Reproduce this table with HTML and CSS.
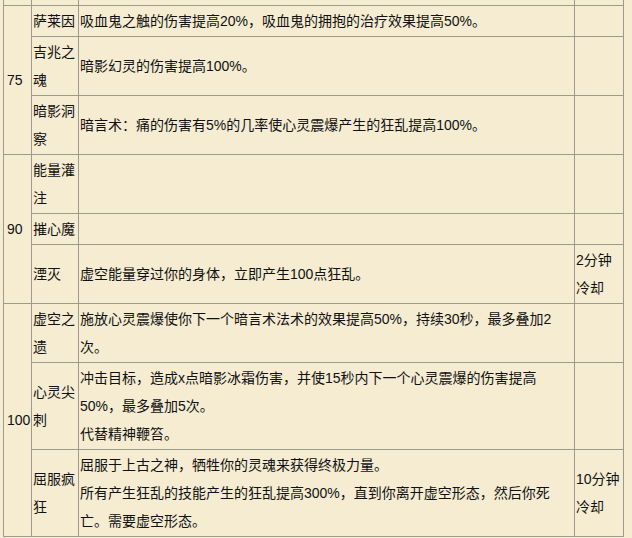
FILE: index.html
```html
<!DOCTYPE html>
<html lang="zh-CN">
<head>
<meta charset="utf-8">
<title>天赋</title>
<link rel="stylesheet" href="styles.css">
</head>
<body>
<table class="talents">
  <colgroup>
    <col class="c-lvl">
    <col class="c-name">
    <col class="c-desc">
    <col class="c-cd">
  </colgroup>
  <tbody>
    <tr class="prev"><td></td><td></td><td></td><td></td></tr>
    <tr>
      <td class="lvl" rowspan="3">75</td>
      <td class="name">萨莱因</td>
      <td class="desc">吸血鬼之触的伤害提高20%，吸血鬼的拥抱的治疗效果提高50%。</td>
      <td class="cd"></td>
    </tr>
    <tr>
      <td class="name">吉兆之魂</td>
      <td class="desc">暗影幻灵的伤害提高100%。</td>
      <td class="cd"></td>
    </tr>
    <tr>
      <td class="name">暗影洞察</td>
      <td class="desc">暗言术：痛的伤害有5%的几率使心灵震爆产生的狂乱提高100%。</td>
      <td class="cd"></td>
    </tr>
    <tr>
      <td class="lvl" rowspan="3">90</td>
      <td class="name">能量灌注</td>
      <td class="desc"></td>
      <td class="cd"></td>
    </tr>
    <tr>
      <td class="name">摧心魔</td>
      <td class="desc"></td>
      <td class="cd"></td>
    </tr>
    <tr>
      <td class="name">湮灭</td>
      <td class="desc">虚空能量穿过你的身体，立即产生100点狂乱。</td>
      <td class="cd">2分钟冷却</td>
    </tr>
    <tr>
      <td class="lvl" rowspan="3">100</td>
      <td class="name">虚空之遗</td>
      <td class="desc">施放心灵震爆使你下一个暗言术法术的效果提高50%，持续30秒，最多叠加2次。</td>
      <td class="cd"></td>
    </tr>
    <tr>
      <td class="name">心灵尖刺</td>
      <td class="desc">冲击目标，造成x点暗影冰霜伤害，并使15秒内下一个心灵震爆的伤害提高50%，最多叠加5次。<br>代替精神鞭笞。</td>
      <td class="cd"></td>
    </tr>
    <tr>
      <td class="name">屈服疯狂</td>
      <td class="desc">屈服于上古之神，牺牲你的灵魂来获得终极力量。<br>所有产生狂乱的技能产生的狂乱提高300%，直到你离开虚空形态，然后你死亡。需要虚空形态。</td>
      <td class="cd">10分钟冷却</td>
    </tr>
  </tbody>
</table>
</body>
</html>
```

FILE: styles.css
```css
html, body {
  margin: 0;
  padding: 0;
  background: #f5ecd2;
}

body {
  overflow: hidden;
  height: 538px;
}

.talents {
  border-collapse: collapse;
  table-layout: fixed;
  width: 621px;
  margin: -16px 0 0 3px;
  font-family: "Liberation Sans", "Noto Sans CJK SC", sans-serif;
  font-size: 14px;
  line-height: 28px;
  color: #111;
}

.c-lvl { width: 28px; }
.c-name { width: 47px; }
.c-desc { width: 496px; }
.c-cd { width: 49px; }

.talents td {
  border: 1px solid #9d998b;
  padding: 1px;
  vertical-align: middle;
  text-align: left;
  word-break: normal;
}

.talents .prev td {
  height: 20px;
  padding: 0;
}

.talents td.lvl {
  padding-left: 3px;
  padding-right: 0;
  white-space: nowrap;
  overflow: visible;
}
```
